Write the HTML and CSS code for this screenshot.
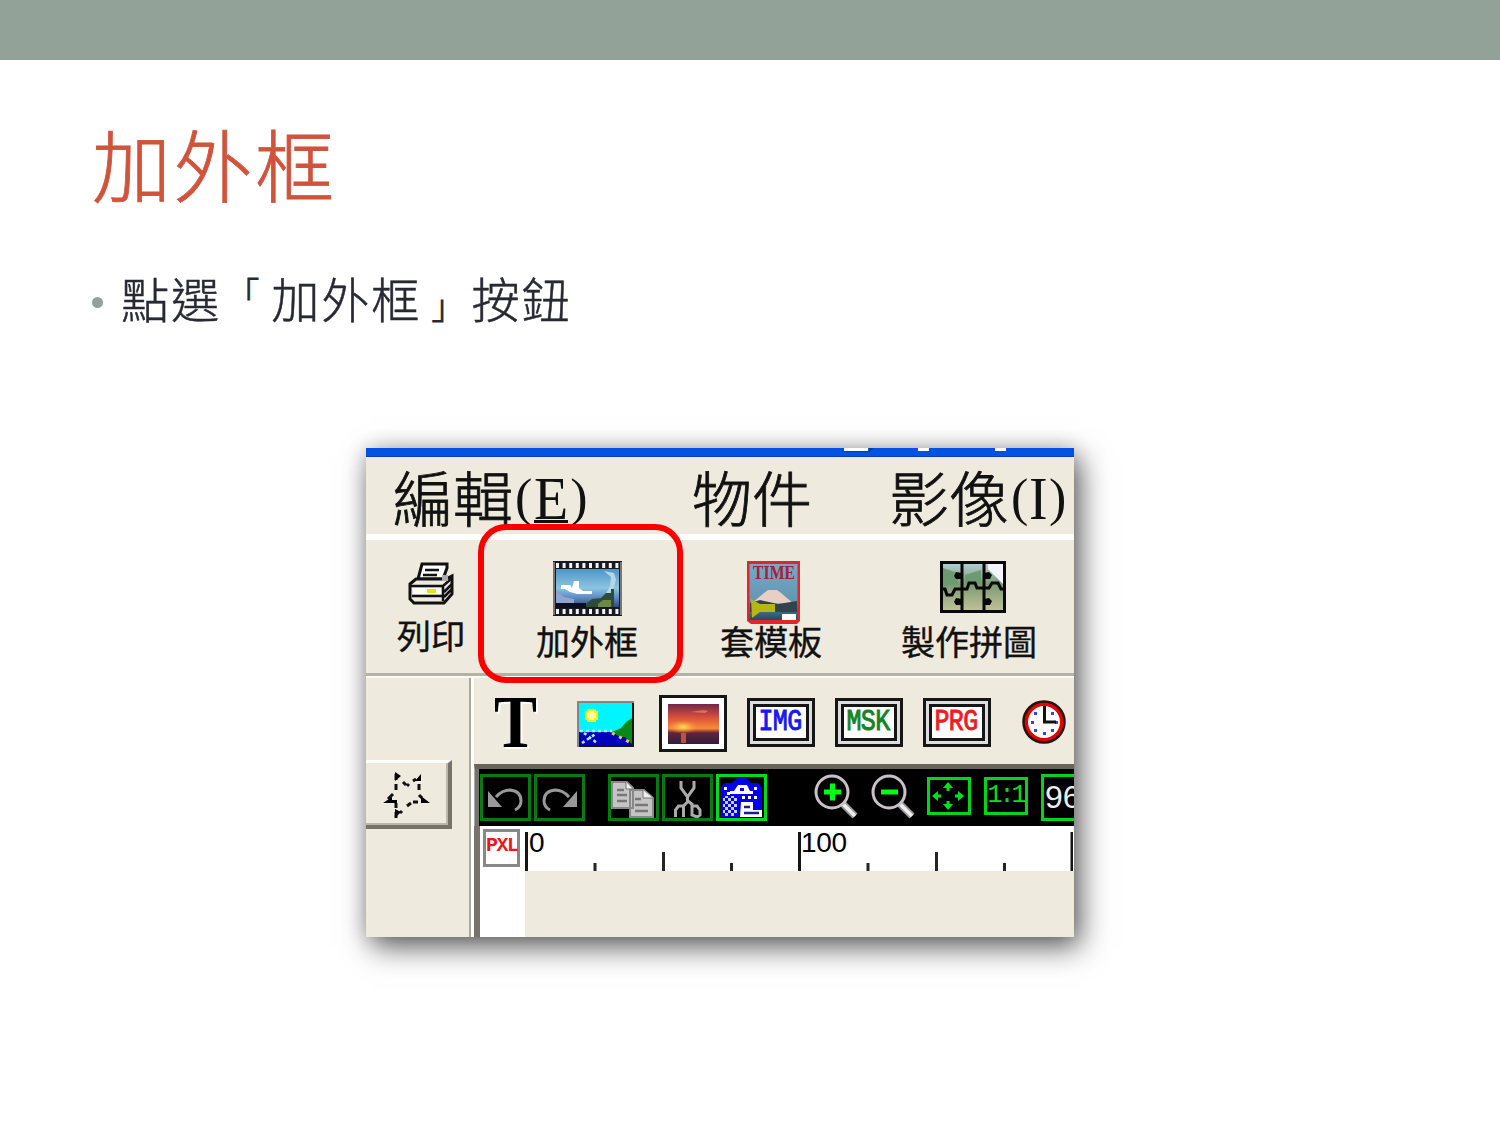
FILE: index.html
```
<!DOCTYPE html>
<html lang="zh-Hant">
<head>
<meta charset="utf-8">
<title>加外框</title>
<link rel="stylesheet" href="styles.css">
</head>
<body>
<div class="band"></div>
<main class="slide">
  <h1 class="title">加外框</h1>
  <ul class="points"><li><span class="dot"></span><span>點選<span class="open">「</span>加外框<span class="close">」</span>按鈕</span></li></ul>
  <section class="shot">
    <div class="window">
      <div class="titlebar"><svg width="708" height="9"><path d="M478 0h24v3h-24zM552 0h11v3h-11zM629 0h11v3h-11z" fill="#fff"/><path d="M480 3h23v-3h4l-3 4h-24z" fill="#123a91"/></svg></div>
      <nav class="menu">
        <span>編輯<i>(<b class="key">E</b>)</i></span><span>物件</span><span>影像<i>(<b>I</b>)</i></span>
      </nav>
      <div class="tools">
        <div class="tool first">
          <svg width="48" height="46" viewBox="0 0 48 46"><path d="M15 2h25v4l-4 11H11z" fill="#fff" stroke="#111" stroke-width="3"/><path d="M18 8h14M16 13h14" stroke="#111" stroke-width="2.5"/><path d="M3 22l6-5h30l6-3v18l-8 9H7l-4-4z" fill="#eeeade" stroke="#111" stroke-width="3"/><path d="M4 24h32v15M5 34h31M36 24l9-8M37 30l8-8M37 35l8-8" stroke="#111" stroke-width="2.5" fill="none"/><path d="M6 26h28v6H6z" fill="#fff"/><path d="M20 27h9v4h-9z" fill="#e6e600"/><path d="M35 13h6v6h-6z" fill="#aaa"/></svg>
          <span>列印</span>
        </div>
        <div class="tool">
          <svg width="69" height="55" viewBox="0 0 69 55"><defs><linearGradient id="sky" x2="0" y2="1"><stop stop-color="#4e96c4"/><stop offset=".5" stop-color="#8cc4e0"/><stop offset=".75" stop-color="#5d8cc4"/><stop offset="1" stop-color="#2b4a80"/></linearGradient></defs><path d="M0 0h69v55H0z" fill="#171923"/><path d="M3 8h63v38H3z" fill="url(#sky)"/><path d="M8 24h9l2 3 2-7h5v7l4 3h9v3H24l-7-2-5-3H8z" fill="#fff"/><path d="M51 10l10 2 2 7-3 11-9 6 6-11 1-9z" fill="#b3d7e6"/><path d="M3 30l8 6 10 2v8H3z" fill="#8fa4cf"/><path d="M3 42h30v5H3z" fill="#0b0d20"/><path d="M33 43l6-5 9-1 5-5h5v-4h3v18H33z" fill="#2c4b3a"/><path d="M45 43l5-4h8v7H45z" fill="#6c8a45"/><path d="M3 4.500h63M3 50.500h63" stroke="#f4f4f4" stroke-width="5" stroke-dasharray="3 3.600"/><path d="M1 1v53M68 1v53" stroke="#777" stroke-width="2"/></svg>
          <span>加外框</span>
        </div>
        <div class="tool mag">
          <svg width="53" height="63" viewBox="0 0 53 63"><defs><linearGradient id="mt" x2="0" y2="1"><stop stop-color="#74aac8"/><stop offset=".65" stop-color="#6596b2"/><stop offset="1" stop-color="#234b61"/></linearGradient></defs><path d="M0 0h53v60l-3 3H4l-4-3z" fill="#e1252b"/><path d="M2.500 3h48v56h-48z" fill="url(#mt)"/><path d="M5 42l12-10 4-3h9l4 3 13 11z" fill="#e7cfc6"/><path d="M3 42l10-3 18 4 19-3v11H3z" fill="#33424f"/><path d="M4 38l9 5h15v8H13l-8 6z" fill="#b6b715"/><path d="M35 53h14v6H35z" fill="#fff"/><text x="6" y="18" class="time" textLength="42" lengthAdjust="spacingAndGlyphs">TIME</text></svg>
          <span>套模板</span>
        </div>
        <div class="tool puzzle">
          <svg width="66" height="52" viewBox="0 0 66 52"><defs><linearGradient id="pz" x2="0" y2="1"><stop stop-color="#b6d2da"/><stop offset=".45" stop-color="#7c9a72"/><stop offset="1" stop-color="#c3c49c"/></linearGradient></defs><path d="M1 1h64v50H1z" fill="url(#pz)"/><path d="M48 3h15v20L48 8z" fill="#f3f5ff"/><path d="M3 7l15 5v11L3 25zM25 14l16-5v14H25z" fill="#6c9a72"/><path d="M1.500 1.500h63v49h-63zM22 2v48M44 2v48M2 28h3l2 6h5l3-6h12l2-6h6l2 5h12l3-5h6l3 6h4" fill="none" stroke="#080908" stroke-width="3"/><path d="M22 12l-6-1-2 4 2 3h6M44 12l5-1 3 3-2 4h-6M22 38l-6-1-2 4 2 3h6M44 38l5-1 3 3-2 4h-6" fill="#080908"/></svg>
          <span>製作拼圖</span>
        </div>
      </div>
      <div class="body">
        <aside class="side"><div class="starbtn"><svg width="48" height="48" viewBox="0 0 48 48"><path d="M14 3v6M14 13v6M11 23l-5 5M14 32v5M14 41v6M18 42l2-2M25 35l4-3M31 31h5M37 24l3 3M37 19v-6M34 8l-3 2M27 13l-2 2M24 14l-3-3" fill="none" stroke="#111" stroke-width="3"/><path d="M13 1l6 4-6 5zM39 3v7h-6zM1 32l9-6v3h5v3zM48 32h-9v-7zM13 47v-9l6 3z"/></svg></div></aside>
        <section class="editor">
          <div class="objects">
            <svg class="letter" width="46" height="56"><text x="3" y="54" fill="#fff" textLength="43" lengthAdjust="spacingAndGlyphs">T</text><text x="1" y="52" textLength="43" lengthAdjust="spacingAndGlyphs">T</text></svg>
            <svg class="pic" width="57" height="46" viewBox="0 0 57 46"><path d="M0 0h57v46H0z" fill="#858585"/><path d="M2 2h53v42H2z" fill="#00f5ff"/><path d="M35 31l9-4 5-6 6-4v26H35z" fill="#078817"/><path d="M2 31h33l8 5h5l7 7v1H2z" fill="#0000bd"/><path d="M11 9h7v2h2v7h-2v2h-7v-2H9v-7h2z" fill="#fff9a8" stroke="#ffed00" stroke-width="2"/><path d="M3 30h32M5 42l15-10M7 32l13 10" stroke="#a6f7ef" stroke-width="2.500" stroke-dasharray="3 3"/><path d="M35 32l19 10" stroke="#dbcf41" stroke-width="3" stroke-dasharray="3 5"/><path d="M2 45h54V2" fill="none" stroke="#151515" stroke-width="2"/></svg>
            <svg class="sun" width="68" height="57" viewBox="0 0 68 57"><defs><linearGradient id="ss" x2="0" y2="1"><stop stop-color="#71264a"/><stop offset=".32" stop-color="#d64d3b"/><stop offset=".61" stop-color="#f98b37"/><stop offset=".72" stop-color="#62243c"/><stop offset="1" stop-color="#301d3a"/></linearGradient><radialGradient id="glow"><stop stop-color="#ffe95a"/><stop offset="1" stop-color="#ff8b30" stop-opacity="0"/></radialGradient></defs><path d="M1.500 1.500h65v54h-65z" fill="#fff" stroke="#161616" stroke-width="3"/><path d="M9 9h51v40H9z" fill="url(#ss)"/><ellipse cx="24" cy="32" rx="15" ry="7" fill="url(#glow)"/><path d="M22 38h5v10h-5z" fill="#d75f43" opacity=".8"/><path d="M31 17l14-2 4 1-3 2z" fill="#ed7a5a" opacity=".8"/></svg>
            <span class="plate blue"><b><span>IMG</span></b></span><span class="plate green"><b><span>MSK</span></b></span><span class="plate red"><b><span>PRG</span></b></span>
            <svg class="clock" width="44" height="44" viewBox="0 0 44 44"><circle cx="22" cy="22" r="18" fill="#fff" stroke="#e60000" stroke-width="4"/><circle cx="22" cy="22" r="20.500" fill="none" stroke="#27120f" stroke-width="2.500"/><path d="M12 12h3v3h-3zM29 12h3v3h-3zM9 21h3v3H9zM12 29h3v3h-3zM29 29h3v3h-3zM21 32h3v3h-3zM33 21h3v3h-3z" fill="#3142ff"/><path d="M22.500 6v16H34" fill="none" stroke="#111" stroke-width="3"/></svg>
          </div>
          <div class="commands">
            <span class="cmd"><svg width="43" height="38" viewBox="0 0 43 38"><path d="M4 12v16h14z" fill="#999"/><path d="M12 18q6-7 14-7 11 1 11 11 0 6-6 9" fill="none" stroke="#999" stroke-width="3"/></svg></span>
            <span class="cmd"><svg width="43" height="38" viewBox="0 0 43 38"><path d="M39 12v16H25z" fill="#999"/><path d="M31 18q-6-7-14-7Q6 12 6 22q0 6 6 9" fill="none" stroke="#999" stroke-width="3"/></svg></span>
            <span class="cmd copy"><svg width="45" height="40" viewBox="0 0 45 40"><path d="M1 4h15l6 6v20H1zM19 12h14l9 8v19H19z" fill="#c5c5c5" stroke="#888" stroke-width="2"/><path d="M6 12h7M6 17h10M6 23h10M24 21h6M24 27h13M24 33h13" stroke="#777" stroke-width="2.500"/><path d="M15 4v7h7M32 12v8h10" fill="#eee" stroke="#777"/></svg></span>
            <span class="cmd"><svg width="43" height="40" viewBox="0 0 43 40"><path d="M15 3v7l6.500 9 6.500-9V3M21.500 17v7l-4 4M22 23l5 4" fill="none" stroke="#aaa" stroke-width="3"/><path d="M9.500 39v-7l3-4h5v11M26 28h5l3 4v5l-3 2-5-2z" fill="none" stroke="#aaa" stroke-width="3"/></svg></span>
            <span class="cmd bright"><svg width="45" height="41" viewBox="0 0 45 41"><defs><pattern id="dither" width="6" height="6" patternUnits="userSpaceOnUse"><path d="M0 0h3v3H0zM3 3h3v3H3z" fill="#c9ceff"/></pattern></defs><path d="M2 10l4-4h7l5-5h9l5 5h7l4 5v29H2z" fill="#0000ef"/><path d="M4 19h14v20H4z" fill="url(#dither)"/><path d="M11 14h4l4-6h9l3 6h3v3H11zM5 10h3v3H5zM35 10h3v3h-3zM23 19h3v3h-3zM29 19h3v3h-3zM35 19h3v3h-3zM8 15h3v3H8z" fill="#fff"/><path d="M21 11h4v3h-4z" fill="#0000ef"/><path d="M22 25h12v8h9v7H21z" fill="#fff"/><path d="M25 30h6M25 36h15" stroke="#171f8a" stroke-width="2.500"/></svg></span>
            <svg class="lens in" width="45" height="46" viewBox="0 0 45 46"><path d="M28 29l13 13" stroke="#999" stroke-width="7"/><path d="M28 29l13 13" stroke="#eee" stroke-width="3.500"/><circle cx="18" cy="18" r="16" fill="#000" stroke="#c9c1c9" stroke-width="3"/><path d="M10 18h17M18.500 9.500v17" stroke="#00ff12" stroke-width="5"/></svg>
            <svg class="lens" width="45" height="46" viewBox="0 0 45 46"><path d="M28 29l13 13" stroke="#999" stroke-width="7"/><path d="M28 29l13 13" stroke="#eee" stroke-width="3.500"/><circle cx="18" cy="18" r="16" fill="#000" stroke="#c9c1c9" stroke-width="3"/><path d="M10 18h17" stroke="#00ff12" stroke-width="5"/></svg>
            <span class="small fit"><svg width="38" height="32" viewBox="0 0 38 32"><path d="M19 4v7M19 21v7M5 16h7M26 16h7" stroke="#00e21c" stroke-width="3"/><path d="M19 2l5 6H14zM19 30l5-6H14zM3 16l6-5v10zM35 16l-6-5v10z" fill="#00e21c"/></svg></span>
            <span class="small">1:1</span>
            <span class="zoomvalue">96</span>
          </div>
          <div class="ruler"><span class="pxl">PXL</span><div class="scale"><svg width="548" height="45"><path d="M1.500 6v39M274.500 6v39M547 6v39" stroke="#151515" stroke-width="3"/><path d="M138.500 26v19M411.500 26v19M70 37v8M206.500 37v8M343 37v8M479.500 37v8" stroke="#252525" stroke-width="3"/><text x="4" y="26">0</text><text x="276" y="26" textLength="46">100</text></svg></div></div>
          <div class="canvas"></div>
        </section>
      </div>
      <div class="highlight"></div>
    </div>
  </section>
</main>
</body>
</html>
```
FILE: styles.css
```
* { box-sizing: border-box; }
body { margin: 0; width: 1500px; height: 1125px; overflow: hidden; background: #fff; font-family: "Noto Sans CJK TC", sans-serif; }
svg { display: block; flex: none; }
.band { height: 60px; background: #93a299; }
.slide { padding: 54px 92px 0; }
.title { margin: 0; height: 98px; line-height: 98px; font-size: 79px; font-weight: 300; letter-spacing: 2.6px; color: #d2533c; -webkit-text-stroke: .8px; }
.points { list-style: none; margin: 52px 0 0; padding: 0; height: 66px; color: #292934; font-size: 48.2px; line-height: 66px; font-weight: 300; letter-spacing: 1.9px; -webkit-text-stroke: .5px; }
.points li { display: flex; align-items: center; gap: 18px; }
.dot { width: 11px; height: 11px; margin-top: 10px; border-radius: 50%; background: #93a299; }
.open, .close { display: inline-block; width: 50px; font-size: 33px; line-height: 40px; letter-spacing: 0; -webkit-text-stroke: 1px; }
.open { padding-left: 5px; vertical-align: 12px; }
.close { padding-left: 10px; vertical-align: -1px; }
.shot { margin: 118px 0 0 274px; }
.window { position: relative; width: 708px; height: 489px; background: #eeeade; display: flex; flex-direction: column; box-shadow: 6px 10px 28px rgba(0,0,0,.62), 0 0 18px rgba(0,0,0,.16); }
.titlebar { height: 9px; background: #0452e3; border-bottom: 1px solid #0641b8; }
.menu { height: 83px; padding-left: 27px; border-bottom: 6px solid #fff; display: grid; grid-template-columns: 299px 197px 1fr; font-size: 60px; line-height: 77px; white-space: nowrap; color: #111; font-weight: 300; -webkit-text-stroke: .8px; }
.menu i { display: inline-flex; align-items: center; height: 50px; padding-left: 2px; vertical-align: -3px; transform: translateY(-10px); font: 400 52px/46px "Liberation Serif", serif; -webkit-text-stroke: 0; }
.menu b { font-weight: 400; font-size: 62px; line-height: 50px; transform: scaleX(.9); }
.menu b.key { box-shadow: inset 0 -3px #111; }
.tools { height: 136px; padding-top: 21px; border-bottom: 3px solid #b4b1a6; display: grid; grid-template-columns: 130px 182px 186px 210px; box-shadow: 0 2px #fbfaf5; z-index: 1; }
.tool { display: grid; grid-template-rows: 62px 38px; justify-items: center; font-size: 34px; color: #111; white-space: nowrap; align-content: start; -webkit-text-stroke: .4px; }
.tool span { line-height: 36px; }
.first { grid-template-rows: 56px 38px; }
.first svg { margin-top: 1px; }
.mag svg { margin-left: 4px; }
.puzzle svg { margin-left: 8px; }
.time { font: bold 18px "Liberation Serif", serif; fill: #a52039; }
.body { flex: 1; display: flex; min-height: 0; }
.side { width: 108px; padding-top: 84px; box-shadow: inset -3px 0 #fff, inset -5px 0 #aaa79c; }
.starbtn { width: 86px; height: 69px; display: flex; align-items: center; justify-content: center; padding: 2px 3px 0 0; border: solid #fff; border-width: 3px 4px 4px 0; border-right-color: #777368; border-bottom-color: #777368; box-shadow: inset -2px -2px #bcb8a9; }
.editor { flex: 1; min-width: 0; }
.objects { height: 88px; padding: 2px 0 0 19px; display: flex; align-items: center; }
.letter { margin-top: 3px; font: bold 74px "Liberation Serif", serif; }
.pic { margin-left: 38px; margin-top: 5px; }
.sun { margin-left: 25px; margin-top: 5px; }
.plate { width: 68px; height: 49px; margin: 2px 0 0 20px; padding: 3px; border: 3px solid #161616; background: #ddd; flex: none; }
.plate b { display: flex; align-items: center; justify-content: center; height: 37px; border: 3px solid #161616; background: #fff; font: 25px/31px "Liberation Mono", monospace; letter-spacing: -.6px; -webkit-text-stroke: .8px; }
.plate b span { transform: scaleY(1.2) translateX(-1px); }
.blue { color: #1818f0; } .green { color: #168423; } .red { color: #f01c24; }
.clock { margin-left: 31px; margin-top: 2px; }
.commands { height: 62px; padding: 5px 0 0 5px; border-left: 1px solid #aaa; border-top: 5px solid #69655b; display: flex; align-items: flex-start; background: #000; overflow: hidden; box-shadow: inset 4px 0 #777368; }
.cmd { width: 51px; height: 47px; margin-right: 3px; flex: none; border: 3px solid #087a12; display: flex; align-items: center; justify-content: center; overflow: hidden; }
.copy { margin-left: 20px; }
.bright { border-color: #00dc1b; }
.lens { margin-right: 12px; }
.in { margin-left: 44px; }
.small { width: 44px; height: 38px; margin: 3px 13px 0 0; border: 3px solid #00d51b; color: #00e21c; font: 25px/32px "Liberation Mono", monospace; letter-spacing: -3px; padding-right: 1px; text-align: center; flex: none; display: flex; align-items: center; justify-content: center; }
.fit { margin-left: -1px; padding-right: 4px; }
.fit svg { margin-right: -2px; }
.zoomvalue { width: 60px; height: 47px; flex: none; border: 3px solid #00d51b; color: #eee; font: 32px/41px "Liberation Sans", sans-serif; padding-left: 1px; }
.ruler { height: 45px; display: flex; background: #fff; border-left: 6px solid #777368; }
.pxl { width: 37px; height: 38px; margin: 3px 5px 0 3px; border: 3px solid #888; color: #ec1820; font: bold 20px/28px "Liberation Mono", monospace; letter-spacing: -1.5px; text-align: center; flex: none; }
.scale { font: 28px "Liberation Sans", sans-serif; overflow: hidden; }
.canvas { height: 66px; border-left: 6px solid #777368; background: linear-gradient(90deg, #fff 45px, #eeeade 45px); }
.highlight { position: absolute; left: 112px; top: 76px; width: 205px; height: 159px; border: 6px solid #fb0000; border-radius: 28px; z-index: 2; }
```
